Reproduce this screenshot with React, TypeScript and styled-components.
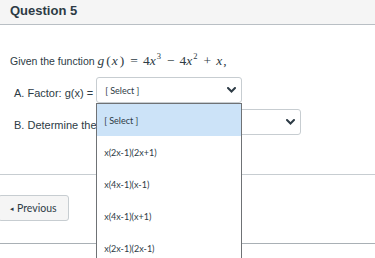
import { createGlobalStyle, styled } from 'styled-components';

const OPTIONS = ['[ Select ]', 'x(2x-1)(2x+1)', 'x(4x-1)(x-1)', 'x(4x-1)(x+1)', 'x(2x-1)(2x-1)'];

const GlobalStyle = createGlobalStyle`
  html, body {
    margin: 0;
    padding: 0;
    background: #ffffff;
    overflow: hidden;
  }
  body {
    font-family: 'Liberation Sans', Arial, sans-serif;
    color: #2d3b45;
  }
`;

function Chevron() {
  return (
    <svg width="9" height="6" viewBox="0 0 9 6">
      <polyline points="1,1 4.5,4.5 8,1" fill="none" stroke="#2d3b45" strokeWidth="2" strokeLinecap="round" />
    </svg>
  );
}

export default function App() {
  return (
    <Page>
      <GlobalStyle />
      <Header>Question 5</Header>
      <Body>
        <Prompt>
          Given the function{' '}
          <Formula>
            <Var>g</Var>
            <Paren>(</Paren>
            <Var>x</Var>
            <Paren>)</Paren>
            <Op>=</Op>4<Var>x</Var>
            <Sup>3</Sup>
            <Op>−</Op>4<Var>x</Var>
            <Sup>2</Sup>
            <Op>+</Op>
            <Var>x</Var>,
          </Formula>
        </Prompt>
        <Row>
          <Label>A. Factor: g(x) =</Label>
          <SelectWrap>
            <SelectBox $width={146}>
              <SelectText>[ Select ]</SelectText>
              <Chevron />
            </SelectBox>
            <OptionList>
              {OPTIONS.map((opt, i) => (
                <OptionItem key={opt} $active={i === 0}>
                  {opt}
                </OptionItem>
              ))}
            </OptionList>
          </SelectWrap>
        </Row>
        <Row>
          <Label>B. Determine the</Label>
          <SelectBox $width={201}>
            <SelectText />
            <Chevron />
          </SelectBox>
        </Row>
      </Body>
      <Footer>
        <NavButton>
          <Arrow>◂</Arrow> Previous
        </NavButton>
      </Footer>
      <BottomRule />
    </Page>
  );
}

const Page = styled.div`
  width: 375px;
  height: 258px;
  overflow: hidden;
`;

const Header = styled.div`
  height: 24px;
  background: #f5f5f5;
  border-bottom: 1px solid #b9bfc4;
  padding-left: 10px;
  font-size: 13px;
  font-weight: bold;
  line-height: 22px;
`;

const Body = styled.div`
  padding: 29px 10px 0 10px;
  height: 120px;
`;

const Prompt = styled.div`
  font-size: 10.5px;
  line-height: 14px;
  margin-bottom: 9px;
  white-space: nowrap;
`;

const Formula = styled.span`
  font-family: 'Liberation Serif', 'Times New Roman', serif;
  font-size: 13.5px;
`;

const Var = styled.i`
  font-style: italic;
  padding-right: 1px;
`;

const Paren = styled.span`
  padding: 0 1px;
`;

const Op = styled.span`
  padding: 0 5px;
`;

const Sup = styled.sup`
  font-size: 8.5px;
  line-height: 0;
  vertical-align: 6px;
  padding-right: 1px;
`;

const Row = styled.div`
  display: flex;
  align-items: center;
  gap: 3px;
  padding-left: 4px;
  margin-bottom: 6px;
`;

const Label = styled.span`
  font-size: 11px;
  line-height: 13px;
  padding-top: 6px;
  white-space: nowrap;
`;

const SelectWrap = styled.div`
  position: relative;
`;

const SelectBox = styled.div<{ $width: number }>`
  box-sizing: border-box;
  width: ${(p) => p.$width}px;
  height: 26px;
  border: 1px solid #c7cdd1;
  border-radius: 3px;
  background: #ffffff;
  display: flex;
  align-items: center;
  justify-content: space-between;
  padding: 0 5px 0 8px;
`;

const SelectText = styled.span`
  font-family: Lato, 'Liberation Sans', sans-serif;
  font-size: 9px;
`;

const OptionList = styled.ul`
  position: absolute;
  top: 100%;
  left: 0;
  box-sizing: border-box;
  width: 146px;
  margin: 0;
  padding: 0;
  list-style: none;
  background: #ffffff;
  border: 1px solid #6f7275;
  z-index: 2;
`;

const OptionItem = styled.li<{ $active: boolean }>`
  height: 32px;
  display: flex;
  align-items: center;
  padding-left: 7px;
  font-family: Lato, 'Liberation Sans', sans-serif;
  font-size: 9px;
  color: #2d3b45;
  background: ${(p) => (p.$active ? '#cce3f8' : '#ffffff')};
`;

const Footer = styled.div`
  border-top: 1px solid #c7cdd1;
  padding: 20px 0 22px 0;
`;

const NavButton = styled.button`
  box-sizing: border-box;
  height: 26px;
  width: 71px;
  margin-left: -2px;
  border: 1px solid #c7cdd1;
  border-radius: 3px;
  background: #f5f5f5;
  color: #2d3b45;
  font-family: Lato, 'Liberation Sans', sans-serif;
  font-size: 10.5px;
  padding: 0 0 0 11px;
  display: flex;
  align-items: center;
  gap: 3px;
`;

const Arrow = styled.span`
  font-size: 7px;
`;

const BottomRule = styled.div`
  border-top: 1px solid #a9b0b5;
`;
